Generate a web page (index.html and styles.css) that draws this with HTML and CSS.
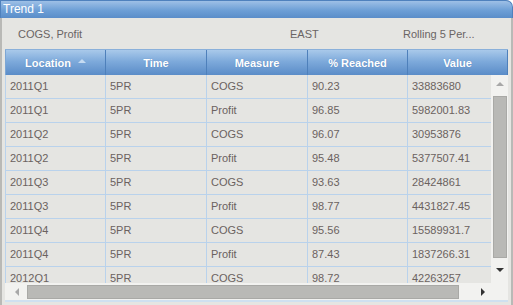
FILE: index.html
```html
<!DOCTYPE html>
<html>
<head>
<meta charset="utf-8">
<link rel="stylesheet" href="styles.css">
</head>
<body>
<div class="widget">
  <div class="titlebar">Trend 1</div>
  <div class="panel">
    <div class="filters">
      <span class="f1">COGS, Profit</span>
      <span class="f2">EAST</span>
      <span class="f3">Rolling 5 Per...</span>
    </div>
    <div class="grid">
      <div class="head">
        <div class="hc">Location<span class="sort"></span></div>
        <div class="hc">Time</div>
        <div class="hc">Measure</div>
        <div class="hc">% Reached</div>
        <div class="hc">Value</div>
      </div>
      <div class="bodyarea">
        <div class="rows">
          <div class="row"><div>2011Q1</div><div>5PR</div><div>COGS</div><div>90.23</div><div>33883680</div></div>
          <div class="row"><div>2011Q1</div><div>5PR</div><div>Profit</div><div>96.85</div><div>5982001.83</div></div>
          <div class="row"><div>2011Q2</div><div>5PR</div><div>COGS</div><div>96.07</div><div>30953876</div></div>
          <div class="row"><div>2011Q2</div><div>5PR</div><div>Profit</div><div>95.48</div><div>5377507.41</div></div>
          <div class="row"><div>2011Q3</div><div>5PR</div><div>COGS</div><div>93.63</div><div>28424861</div></div>
          <div class="row"><div>2011Q3</div><div>5PR</div><div>Profit</div><div>98.77</div><div>4431827.45</div></div>
          <div class="row"><div>2011Q4</div><div>5PR</div><div>COGS</div><div>95.56</div><div>15589931.7</div></div>
          <div class="row"><div>2011Q4</div><div>5PR</div><div>Profit</div><div>87.43</div><div>1837266.31</div></div>
          <div class="row"><div>2012Q1</div><div>5PR</div><div>COGS</div><div>98.72</div><div>42263257</div></div>
        </div>
        <div class="vscroll">
          <span class="arr up"></span>
          <span class="vthumb"></span>
          <span class="arr down"></span>
        </div>
      </div>
      <div class="hscroll">
        <span class="arr left"></span>
        <span class="hthumb"></span>
        <span class="arr right"></span>
      </div>
    </div>
  </div>
</div>
</body>
</html>
```
FILE: styles.css
```css
* { box-sizing: border-box; }
body { margin: 0; background: #ffffff; font-family: "Liberation Sans", Arial, sans-serif; }
.widget { width: 513px; height: 305px; display: flex; flex-direction: column; }
.titlebar {
  height: 18px;
  background: linear-gradient(#9ec0e6, #6d9fd6 55%, #5a8dc9);
  border: 1px solid #4f81bd;
  border-bottom: none;
  border-top-right-radius: 7px;
  color: #ffffff;
  font-size: 12px;
  line-height: 17px;
  padding-left: 2px;
}
.panel {
  flex: 1;
  background: #e5e5e2;
  border-left: 2px solid #b9b9b6;
  border-right: 2px solid #b9b9b6;
  display: flex;
  flex-direction: column;
}
.filters {
  height: 31px;
  display: grid;
  grid-template-columns: 272px 113px 1fr;
  align-items: center;
  padding-left: 16px;
  font-size: 11px;
  color: #6a6464;
}
.grid {
  margin-left: 3px;
  width: 503px;
  display: flex;
  flex-direction: column;
  border-bottom: 2px solid #cfe0f0;
}
.head {
  height: 26px;
  display: grid;
  grid-template-columns: 101px 101px 101px 100px 100px;
  background: linear-gradient(#a9c9ea, #7eaadb 45%, #5a8cc8);
  border-top: 1px solid #8ab0da;
}
.hc {
  color: #ffffff;
  font-weight: bold;
  font-size: 11px;
  display: flex;
  align-items: center;
  justify-content: center;
  border-right: 1px solid #4e80bb;
  text-shadow: 0 0 1px rgba(40,80,140,0.4);
  position: relative;
}
.hc:first-child { border-left: 1px solid #7da6d4; }
.sort {
  width: 0; height: 0;
  border-left: 4px solid transparent;
  border-right: 4px solid transparent;
  border-bottom: 4px solid #c5dbf2;
  margin-left: 7px;
  margin-top: -4px;
}
.bodyarea { height: 208px; display: flex; }
.rows { width: 486px; overflow: hidden; }
.row {
  height: 24px;
  display: grid;
  grid-template-columns: 101px 101px 101px 100px 100px;
  border-bottom: 1px solid #b9d2ec;
}
.row > div {
  border-right: 1px solid #b9d2ec;
  font-size: 11px;
  color: #6b625f;
  padding-left: 4px;
  line-height: 23px;
  white-space: nowrap;
}
.row > div:first-child { border-left: 1px solid #b9d2ec; }
.vscroll {
  width: 17px;
  background: #f2f2f0;
  display: flex;
  flex-direction: column;
  align-items: center;
}
.vthumb {
  width: 14px;
  height: 162px;
  background: #b9b9b6;
  border: 1px solid #a9a9a6;
}
.arr { width: 0; height: 0; display: block; }
.arr.up {
  border-left: 4px solid transparent;
  border-right: 4px solid transparent;
  border-bottom: 4px solid #a8a8a8;
  margin: 7px 0 10px;
}
.arr.down {
  border-left: 4px solid transparent;
  border-right: 4px solid transparent;
  border-top: 4px solid #333333;
  margin-top: 10px;
}
.hscroll {
  height: 17px;
  background: #f2f2f0;
  display: flex;
  align-items: center;
  padding-left: 10px;
}
.arr.left {
  border-top: 4px solid transparent;
  border-bottom: 4px solid transparent;
  border-right: 4px solid #a8a8a8;
}
.hthumb {
  width: 432px;
  height: 14px;
  background: #b9b9b6;
  border: 1px solid #a9a9a6;
  margin-left: 8px;
}
.arr.right {
  border-top: 4px solid transparent;
  border-bottom: 4px solid transparent;
  border-left: 4px solid #333333;
  margin-left: 22px;
}
```
